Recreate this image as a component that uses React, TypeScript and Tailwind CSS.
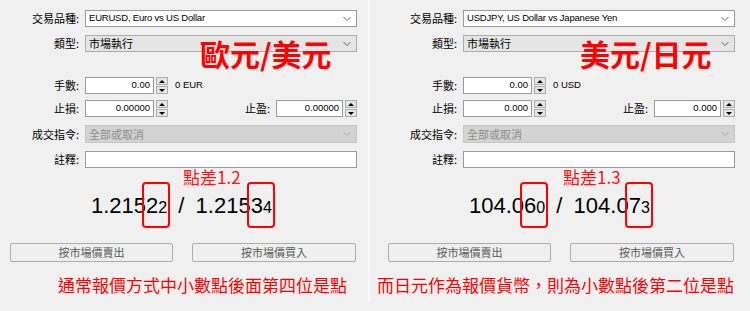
import React from "react";

const CJK = "font-['Noto_Sans_CJK_TC','Noto_Sans_CJK_SC',sans-serif]";
const LAT = "font-['Liberation_Sans','Noto_Sans_CJK_TC',sans-serif]";

const Chevron = ({ color = "#666" }: { color?: string }) => (
  <svg width="8" height="5" viewBox="0 0 8 5" className="absolute right-[5px] top-1/2 -translate-y-1/2">
    <polyline points="0.5,0.5 4,4 7.5,0.5" fill="none" stroke={color} strokeWidth="1" />
  </svg>
);

const Spinner = () => (
  <div className="ml-[2px] flex h-[17px] w-[12px] flex-col justify-between">
    <div className="flex h-[8px] items-center justify-center border border-[#adadad] bg-[#e5e5e5]">
      <svg width="6" height="3" viewBox="0 0 6 3">
        <path d="M0 3 L3 0 L6 3Z" fill="#000" />
      </svg>
    </div>
    <div className="flex h-[8px] items-center justify-center border border-[#adadad] bg-[#e5e5e5]">
      <svg width="6" height="3" viewBox="0 0 6 3">
        <path d="M0 0 L3 3 L6 0Z" fill="#000" />
      </svg>
    </div>
  </div>
);

const Label = ({ children }: { children: React.ReactNode }) => (
  <div className={`w-[80px] shrink-0 pr-[1px] text-right text-[11px] leading-none text-black ${CJK}`}>{children}</div>
);

const NumInput = ({ value, w }: { value: string; w: string }) => (
  <div className={`flex h-[17px] ${w} items-center justify-end border border-[#9a9a9a] bg-white pr-[3px] text-[9.5px] text-black ${LAT}`}>
    {value}
  </div>
);

type PanelProps = {
  symbol: string;
  title: string;
  titleLeft: string;
  ccy: string;
  lots: string;
  sl: string;
  spread: string;
  spreadLeft: string;
  priceLeft: string;
  a1: string;
  a2: string;
  a3: string;
  b1: string;
  b2: string;
  b3: string;
  bottom: string;
  bottomLeft: string;
};

const Panel = (p: PanelProps) => (
  <div className="relative flex w-[368px] flex-col pt-[10px]">
    <div className={`absolute z-10 top-[38px] ${p.titleLeft} text-[30px] font-bold leading-[30px] text-[#ff0000] ${CJK}`}>
      {p.title}
    </div>
    {/* symbol */}
    <div className="flex h-[17px] items-center">
      <Label>交易品種:</Label>
      <div className={`relative ml-[5px] flex h-[17px] w-[272px] items-center border border-[#9a9a9a] bg-white pl-[3px] text-[9.5px] tracking-[-0.2px] text-black ${LAT}`}>
        {p.symbol}
        <Chevron />
      </div>
    </div>
    {/* type */}
    <div className="mt-[8px] flex h-[17px] items-center">
      <Label>類型:</Label>
      <div className={`relative ml-[5px] flex h-[17px] w-[272px] items-center border border-[#adadad] bg-[#e5e5e5] pl-[3px] text-[11px] text-black ${CJK}`}>
        市場執行
        <Chevron />
      </div>
    </div>
    {/* lots */}
    <div className="mt-[25px] flex h-[17px] items-center">
      <Label>手數:</Label>
      <div className="ml-[5px] flex items-center">
        <NumInput value={p.lots} w="w-[69px]" />
        <Spinner />
        <span className={`ml-[7px] text-[9.5px] text-black ${LAT}`}>{p.ccy}</span>
      </div>
    </div>
    {/* sl / tp */}
    <div className="mt-[6px] flex h-[17px] items-center">
      <Label>止損:</Label>
      <div className="ml-[5px] flex items-center">
        <NumInput value={p.sl} w="w-[69px]" />
        <Spinner />
      </div>
      <div className={`ml-[77px] text-[11px] leading-none text-black ${CJK}`}>止盈:</div>
      <div className="ml-[6px] flex items-center">
        <NumInput value={p.sl} w="w-[67px]" />
        <Spinner />
      </div>
    </div>
    {/* fill */}
    <div className="mt-[8px] flex h-[18px] items-center">
      <Label>成交指令:</Label>
      <div className={`relative ml-[5px] flex h-[18px] w-[272px] items-center border border-[#c6c6c6] bg-[#d3d3d3] pl-[3px] text-[11px] text-[#8c8c8c] ${CJK}`}>
        全部或取消
        <Chevron color="#a8a8a8" />
      </div>
    </div>
    {/* comment */}
    <div className="mt-[8px] flex h-[17px] items-center">
      <Label>註釋:</Label>
      <div className="ml-[5px] h-[17px] w-[272px] border border-[#9a9a9a] bg-white" />
    </div>
    {/* spread */}
    <div className={`h-[17px] ${p.spreadLeft} text-[17px] leading-[17px] text-[#ff1010] ${CJK}`}>{p.spread}</div>
    {/* price */}
    <div className={`h-[45px] pt-[10px] ${p.priceLeft} whitespace-pre text-[22px] leading-[22px] text-black ${LAT}`}>
      {p.a1}
      <span className="relative">
        {p.a2}
        <span className="text-[16px]">{p.a3}</span>
        <span className="absolute -bottom-[10px] -left-[4px] -right-[3px] -top-[11px] rounded-[4px] border-2 border-[#ff0000]" />
      </span>
      {" "}
      <span className="mx-[5px]">/</span>
      {" "}
      {p.b1}
      <span className="relative">
        {p.b2}
        <span className="text-[16px]">{p.b3}</span>
        <span className="absolute -bottom-[10px] -left-[4px] -right-[3px] -top-[11px] rounded-[4px] border-2 border-[#ff0000]" />
      </span>
    </div>
    {/* buttons */}
    <div className="mt-[13px] flex h-[19px] items-center">
      <div className={`ml-[10px] flex h-[19px] w-[163px] items-center justify-center rounded-[2px] border border-[#adadad] bg-[#efefef] text-[11px] text-[#5a5a5a] ${CJK}`}>
        按市場價賣出
      </div>
      <div className={`ml-[19px] flex h-[19px] w-[164px] items-center justify-center rounded-[2px] border border-[#adadad] bg-[#efefef] text-[11px] text-[#5a5a5a] ${CJK}`}>
        按市場價買入
      </div>
    </div>
    {/* bottom */}
    <div className={`mt-[13px] h-[20px] ${p.bottomLeft} whitespace-nowrap text-[17px] leading-[20px] text-[#ff0000] ${CJK}`}>
      {p.bottom}
    </div>
  </div>
);

export default function App() {
  return (
    <div className="flex h-[311px] w-[750px] overflow-hidden bg-[#f0f0f0]">
      <Panel
        symbol="EURUSD, Euro vs US Dollar"
        title="歐元/美元"
        titleLeft="left-[200px]"
        ccy="0 EUR"
        lots="0.00"
        sl="0.00000"
        spread="點差1.2"
        spreadLeft="ml-[183px]"
        priceLeft="pl-[91px]"
        a1="1.215"
        a2="2"
        a3="2"
        b1="1.215"
        b2="3"
        b3="4"
        bottom="通常報價方式中小數點後面第四位是點"
        bottomLeft="ml-[58px]"
      />
      <div className="h-[303px] w-[2px] bg-[#f9f9f9]" />
      <div className="w-[380px] pl-[8px]">
        <Panel
          symbol="USDJPY, US Dollar vs Japanese Yen"
          title="美元/日元"
          titleLeft="left-[202px]"
          ccy="0 USD"
          lots="0.00"
          sl="0.000"
          spread="點差1.3"
          spreadLeft="ml-[185px]"
          priceLeft="pl-[91px]"
          a1="104.0"
          a2="6"
          a3="0"
          b1="104.0"
          b2="7"
          b3="3"
          bottom="而日元作為報價貨幣，則為小數點後第二位是點"
          bottomLeft="-ml-[1px]"
        />
      </div>
    </div>
  );
}
